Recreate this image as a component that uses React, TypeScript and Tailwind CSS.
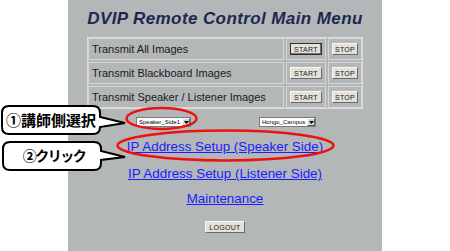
import React from "react";

const rows = [
  "Transmit All Images",
  "Transmit Blackboard Images",
  "Transmit Speaker / Listener Images",
];

const Btn = ({ label, focused, w }: { label: string; focused?: boolean; w: string }) => (
  <div
    className={`${w} h-[12px] flex items-center justify-center bg-[#e4e1d8] text-[7px] leading-none text-[#202020] tracking-[0.3px] border ${
      focused
        ? "border-[#303030] shadow-[inset_-1px_-1px_0_#707070]"
        : "border-t-[#f8f8f4] border-l-[#f8f8f4] border-r-[#6a6a6a] border-b-[#6a6a6a]"
    }`}
  >
    {label}
  </div>
);

const FakeSelect = ({ value, w }: { value: string; w: string }) => (
  <div className={`${w} h-[10px] flex items-center bg-white border border-[#7a7a7a] text-[6px] leading-none text-black`}>
    <span className="flex-1 pl-[2px] whitespace-nowrap">{value}</span>
    <span className="w-[8px] h-[8px] bg-[#d8d8d8] border border-l-[#fff] border-t-[#fff] border-r-[#606060] border-b-[#606060] flex items-center justify-center">
      <svg width="5" height="3" viewBox="0 0 5 3">
        <path d="M0 0 L5 0 L2.5 3 Z" fill="#000" />
      </svg>
    </span>
  </div>
);

export default function App() {
  return (
    <div className="relative w-[450px] h-[251px] bg-white overflow-hidden flex justify-center" style={{ fontFamily: "'Liberation Sans', Arial, sans-serif" }}>
      <div className="w-[314px] h-[251px] bg-[#b3b7b7] flex flex-col items-center">
        <h1 className="mt-[8px] h-[22px] text-[17px] leading-[22px] font-bold italic text-[#1c2850] tracking-[0.4px]">
          DVIP Remote Control Main Menu
        </h1>
        <div className="mt-[7px] w-[276px] border border-[#dcdede] flex flex-col gap-[2px]">
          {rows.map((r, i) => (
            <div key={r} className="flex gap-[2px] h-[22px]">
              <div className="w-[196px] border border-[#d6d8d8] flex items-center pl-[3px] text-[11px] text-[#1a1a1a]">
                {r}
              </div>
              <div className="w-[40px] border border-[#d6d8d8] flex items-center justify-center">
                <Btn label="START" focused={i === 0} w="w-[32px]" />
              </div>
              <div className="w-[34px] border border-[#d6d8d8] flex items-center justify-center">
                <Btn label="STOP" w="w-[26px]" />
              </div>
            </div>
          ))}
        </div>
        <div className="mt-[8px] w-[276px] flex pl-[49px]">
          <FakeSelect value="Speaker_Side1" w="w-[55px]" />
          <div className="ml-[68px]">
            <FakeSelect value="Hongo_Campus" w="w-[57px]" />
          </div>
        </div>
        <div className="mt-[12px] flex flex-col items-center text-[13.4px] leading-[16px] text-[#1c1cff] underline">
          <a href="#">IP Address Setup (Speaker Side)</a>
          <a href="#" className="mt-[11px]">IP Address Setup (Listener Side)</a>
          <a href="#" className="mt-[9px]">Maintenance</a>
        </div>
        <div className="mt-[14px]">
          <Btn label="LOGOUT" w="w-[40px]" />
        </div>
      </div>

      <svg className="absolute left-0 top-0 pointer-events-none" width="450" height="251" viewBox="0 0 450 251">
        <ellipse cx="161.5" cy="118.5" rx="35" ry="10.5" fill="none" stroke="#ee1111" strokeWidth="2.5" />
        <ellipse cx="225.5" cy="145.5" rx="108" ry="15" fill="none" stroke="#ee1111" strokeWidth="2.5" />
        <path
          d="M9 106 H93 Q100 106 100 113 V117 L125 123 L100 127 V127 Q100 134 93 134 H9 Q2 134 2 127 V113 Q2 106 9 106 Z"
          fill="#fff"
          stroke="#000"
          strokeWidth="2"
        />
        <path
          d="M10 142 H94 Q101 142 101 149 V151 L125 157 L101 160 V163 Q101 170 94 170 H10 Q3 170 3 163 V149 Q3 142 10 142 Z"
          fill="#fff"
          stroke="#000"
          strokeWidth="2"
        />
        <text x="51" y="126" textAnchor="middle" fontSize="15" fontWeight="bold" fill="#000" fontFamily="'Noto Sans CJK JP', sans-serif">
          ①講師側選択
        </text>
        <text x="54" y="161" textAnchor="middle" fontSize="14" fontWeight="bold" fill="#000" letterSpacing="-1.5" fontFamily="'Noto Sans CJK JP', sans-serif">
          ②クリック
        </text>
      </svg>
    </div>
  );
}
